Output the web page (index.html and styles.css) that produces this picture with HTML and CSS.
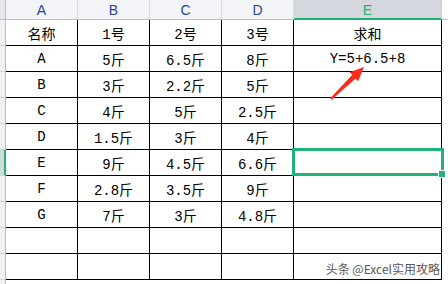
FILE: index.html
```html
<!DOCTYPE html>
<html lang="zh">
<head>
<meta charset="utf-8">
<link rel="stylesheet" href="styles.css">
</head>
<body>
<div class="sheet">
  <div class="row hdr">
    <div class="corner"></div>
    <div class="ch">A</div>
    <div class="ch">B</div>
    <div class="ch">C</div>
    <div class="ch">D</div>
    <div class="ch on">E</div>
    <div class="ch f"></div>
  </div>
  <div class="row"><div class="rh"></div><div class="c">名称</div><div class="c">1号</div><div class="c">2号</div><div class="c">3号</div><div class="c">求和</div><div class="f"></div></div>
  <div class="row"><div class="rh"></div><div class="c">A</div><div class="c">5斤</div><div class="c">6.5斤</div><div class="c">8斤</div><div class="c">Y=5+6.5+8</div><div class="f"></div></div>
  <div class="row"><div class="rh"></div><div class="c">B</div><div class="c">3斤</div><div class="c">2.2斤</div><div class="c">5斤</div><div class="c"></div><div class="f"></div></div>
  <div class="row"><div class="rh"></div><div class="c">C</div><div class="c">4斤</div><div class="c">5斤</div><div class="c">2.5斤</div><div class="c"></div><div class="f"></div></div>
  <div class="row"><div class="rh"></div><div class="c">D</div><div class="c">1.5斤</div><div class="c">3斤</div><div class="c">4斤</div><div class="c"></div><div class="f"></div></div>
  <div class="row"><div class="rh on"></div><div class="c">E</div><div class="c">9斤</div><div class="c">4.5斤</div><div class="c">6.6斤</div><div class="c active"></div><div class="f"></div></div>
  <div class="row"><div class="rh"></div><div class="c">F</div><div class="c">2.8斤</div><div class="c">3.5斤</div><div class="c">9斤</div><div class="c"></div><div class="f"></div></div>
  <div class="row"><div class="rh"></div><div class="c">G</div><div class="c">7斤</div><div class="c">3斤</div><div class="c">4.8斤</div><div class="c"></div><div class="f"></div></div>
  <div class="row"><div class="rh"></div><div class="c"></div><div class="c"></div><div class="c"></div><div class="c"></div><div class="c"></div><div class="f"></div></div>
  <div class="row"><div class="rh"></div><div class="c"></div><div class="c"></div><div class="c"></div><div class="c"></div><div class="c"></div><div class="f"></div></div>
  <div class="row tail"><div class="rh"></div><div class="f"></div></div>

  <svg class="arrow" width="448" height="284" viewBox="0 0 448 284" aria-hidden="true">
    <polygon points="364,67 358.1,81.3 355.6,78.6 331.7,99.8 330.2,98.2 352.3,74.8 349.6,72.2" fill="#ff2a1a"/>
  </svg>
  <div class="mark">头条 @Excel实用攻略</div>
</div>
</body>
</html>
```

FILE: styles.css
```css
* { box-sizing: border-box; }
html, body { margin: 0; padding: 0; background: #fff; }
body { width: 448px; height: 284px; overflow: hidden; }

.sheet {
  position: relative;
  width: 448px;
  height: 284px;
  font-family: "Liberation Mono", "Noto Sans CJK SC", monospace;
  font-size: 14px;
  color: #000;
}

.row {
  display: grid;
  grid-template-columns: 6px 72px 72px 72px 72px 148px 1fr;
  height: 26px;
}

.row.hdr { height: 20px; }
.row.tail { height: 5px; }

.corner {
  background: #e6e8ec;
  border-right: 1px solid #b9bec8;
  border-bottom: 1px solid #b9bec8;
}

.ch {
  background: #f3f4f7;
  border-right: 1px solid #d9dce2;
  border-bottom: 1px solid #b9bec8;
  display: flex;
  align-items: center;
  justify-content: center;
  font-family: "Liberation Sans", Arial, sans-serif;
  font-size: 14px;
  color: #27479a;
  padding-top: 1px;
}

.ch.on {
  background: #d4d7dd;
  color: #1fae74;
  border-bottom: 2px solid #21b27a;
  border-right-color: #c8ccd3;
}

.ch.f { border-right: none; }

.rh {
  background: #eff1f4;
  border-right: 1px solid #b9bec8;
  border-bottom: 1px solid #cdd2da;
}

.rh.on {
  background: #d4d7dd;
  border-right: 2px solid #21b27a;
}

.c {
  border-right: 1px solid #000;
  border-bottom: 1px solid #000;
  display: flex;
  align-items: center;
  justify-content: center;
  white-space: nowrap;
}

.f { background: #fff; }

.c.active { position: relative; }
.c.active::after {
  content: "";
  position: absolute;
  left: -2px;
  top: -2px;
  right: -3px;
  bottom: -1px;
  border: 3px solid #21b27a;
}
.c.active::before {
  content: "";
  position: absolute;
  right: -4px;
  bottom: -2px;
  width: 6px;
  height: 6px;
  background: #21b27a;
  box-shadow: 0 0 0 1px #fff;
  z-index: 2;
}

.arrow {
  position: absolute;
  left: 0;
  top: 0;
  pointer-events: none;
}

.mark {
  position: absolute;
  right: 8px;
  top: 261px;
  font-family: "Noto Sans CJK SC", "Noto Sans", sans-serif;
  font-size: 12px;
  line-height: 16px;
  color: #5a5a5a;
  text-shadow: 0 0 1px #fff, 0 0 1px #fff;
  white-space: nowrap;
}
```
